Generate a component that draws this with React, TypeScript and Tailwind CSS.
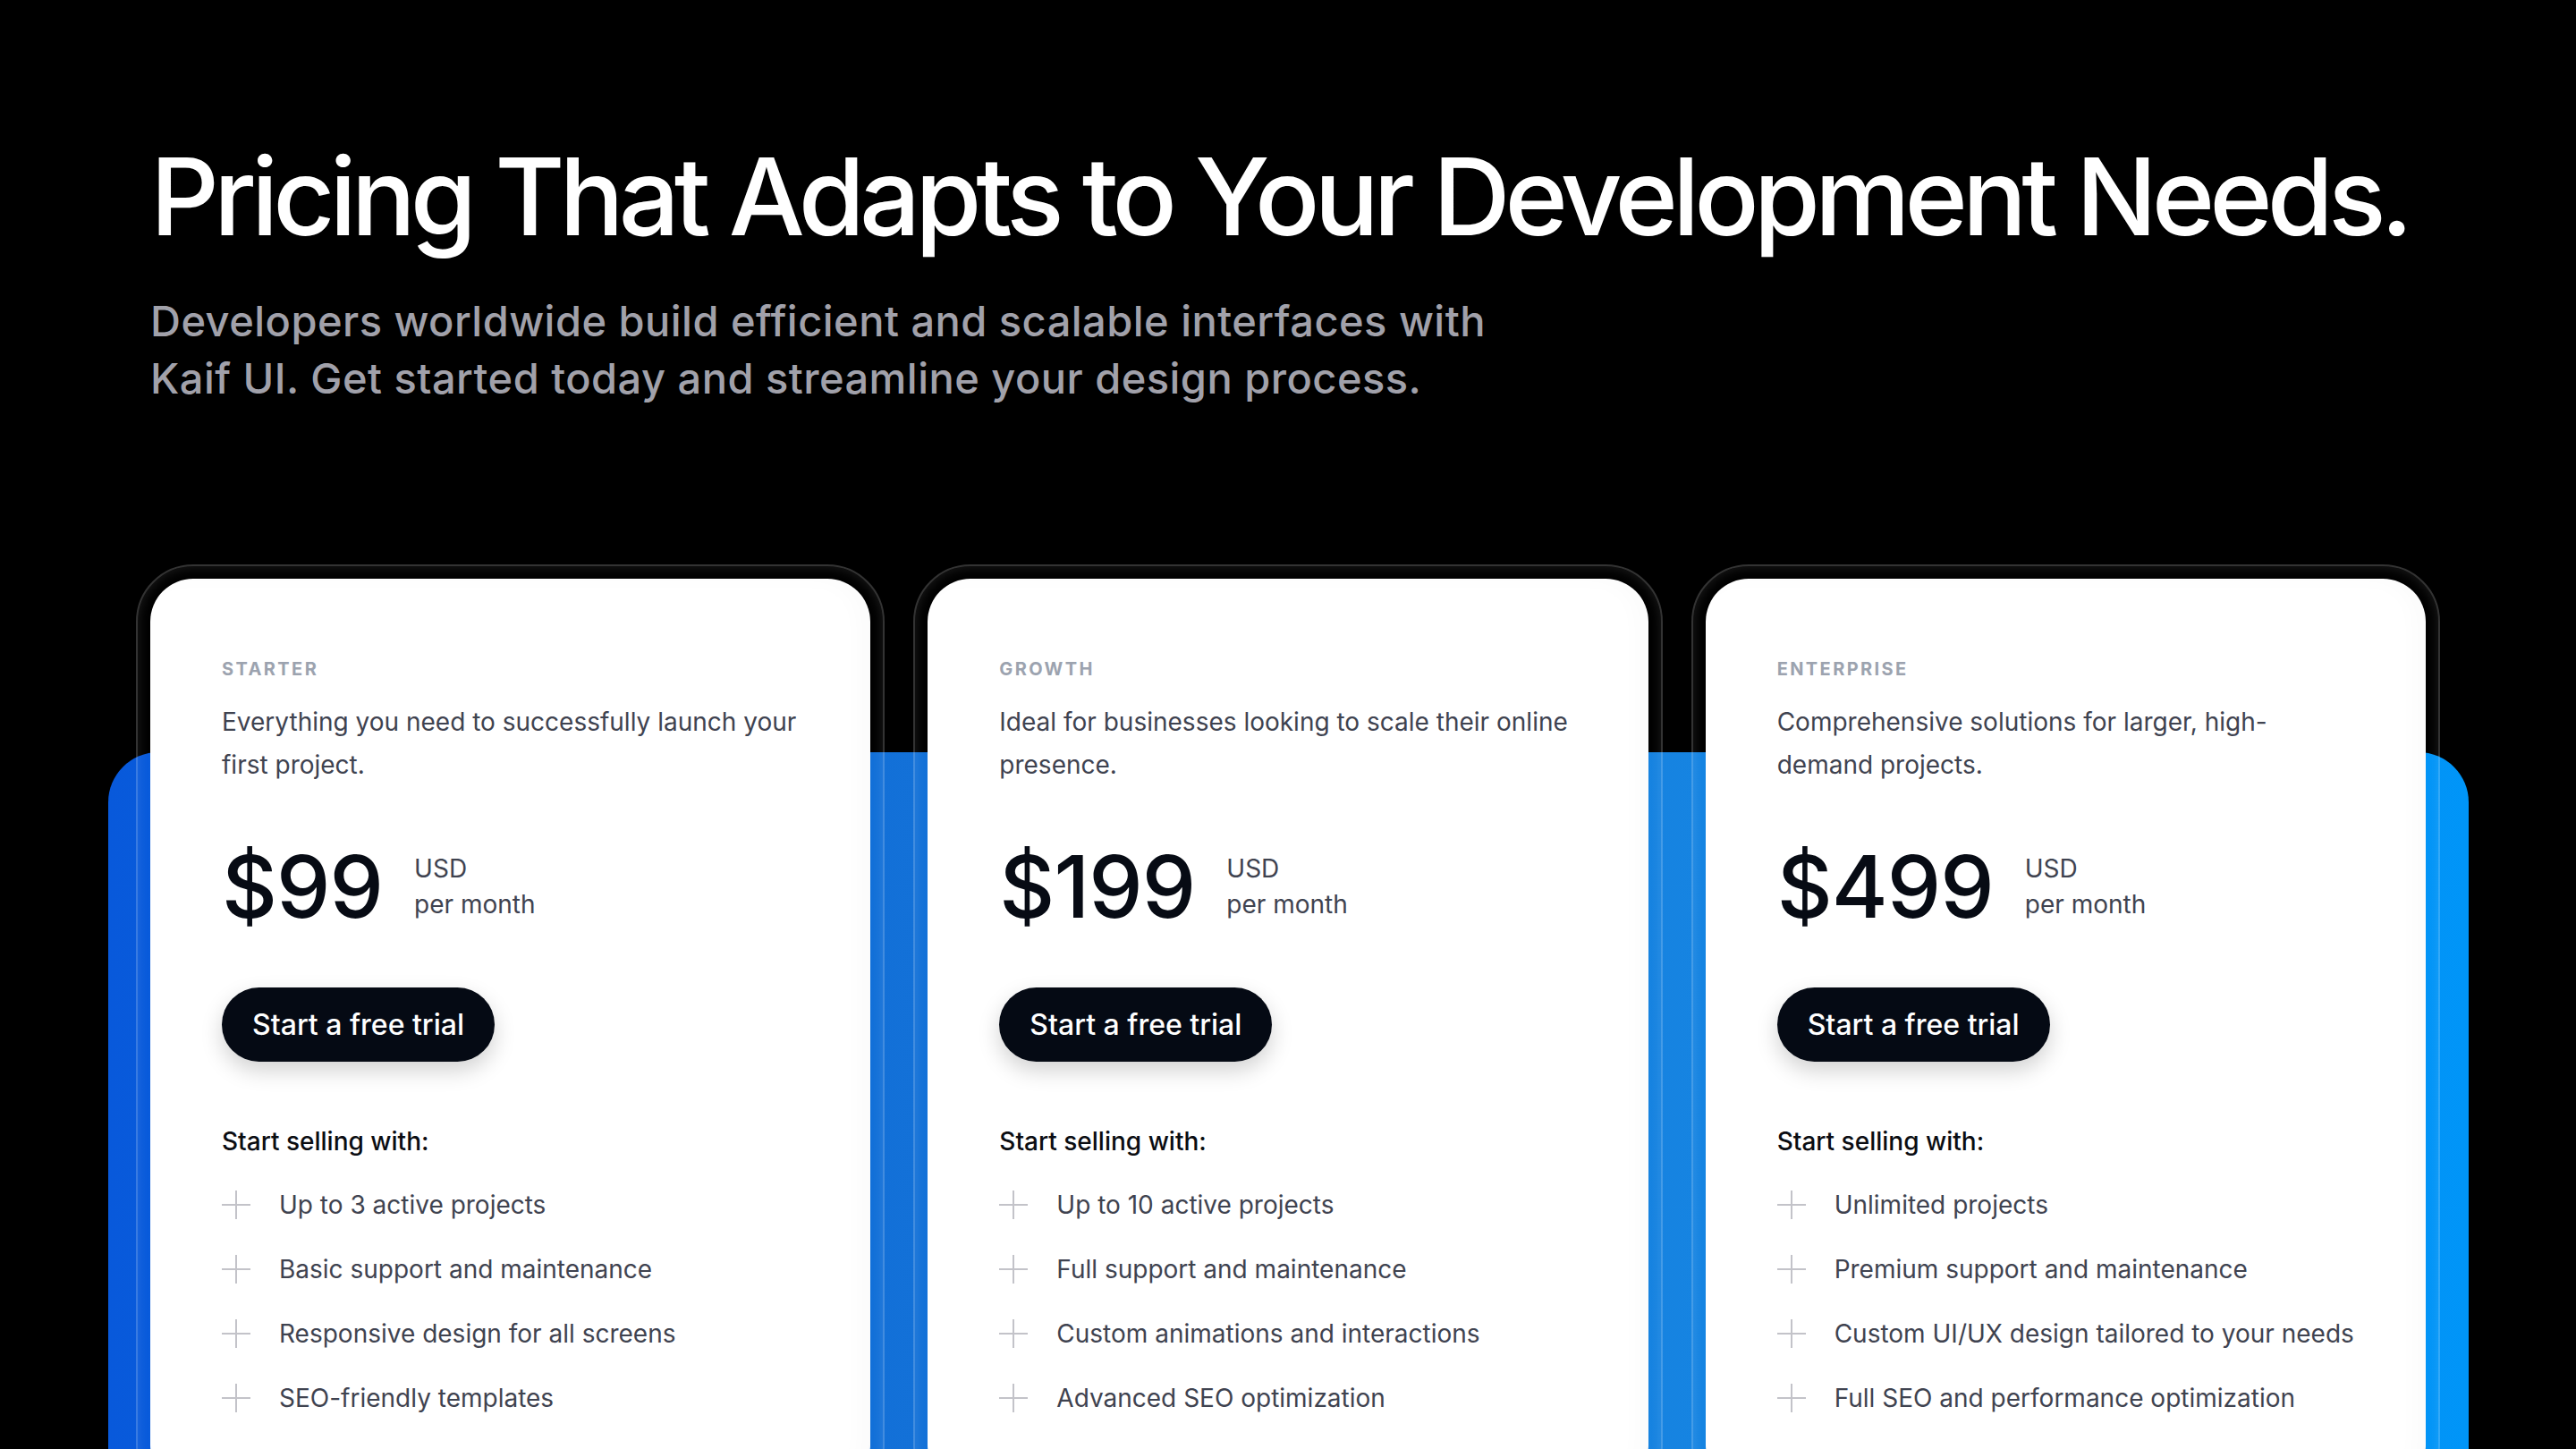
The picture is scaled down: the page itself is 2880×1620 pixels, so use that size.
import React from 'react';

interface Plan {
  id: string;
  name: string;
  description: string;
  price: string;
  features: string[];
}

const plans: Plan[] = [
  {
    id: 'starter',
    name: 'Starter',
    description: 'Everything you need to successfully launch your first project.',
    price: '$99',
    features: [
      'Up to 3 active projects',
      'Basic support and maintenance',
      'Responsive design for all screens',
      'SEO-friendly templates',
    ],
  },
  {
    id: 'growth',
    name: 'Growth',
    description: 'Ideal for businesses looking to scale their online presence.',
    price: '$199',
    features: [
      'Up to 10 active projects',
      'Full support and maintenance',
      'Custom animations and interactions',
      'Advanced SEO optimization',
    ],
  },
  {
    id: 'enterprise',
    name: 'Enterprise',
    description: 'Comprehensive solutions for larger, high-demand projects.',
    price: '$499',
    features: [
      'Unlimited projects',
      'Premium support and maintenance',
      'Custom UI/UX design tailored to your needs',
      'Full SEO and performance optimization',
    ],
  },
];

const PlusIcon: React.FC = () => (
  <svg className="w-8 h-8 shrink-0 text-[#c3c3c9]" viewBox="0 0 32 32" fill="none" stroke="currentColor" strokeWidth={2}>
    <path d="M16 0v32M0 16h32" />
  </svg>
);

const PlanCard: React.FC<{ plan: Plan }> = ({ plan }) => (
  <div className="rounded-[64px] border-2 border-white/20 p-[14px] shadow-[inset_0_0_14px_rgba(255,255,255,0.12)]">
    <div className="bg-white rounded-[48px] px-[80px] pt-[87px] pb-[80px] shadow-[inset_-12px_0_24px_rgba(0,0,0,0.02)]">
      {/* Plan label */}
      <div className="text-[20px] leading-[28px] font-bold uppercase tracking-[0.12em] text-[#9ca3af]">
        {plan.name}
      </div>
      <p className="mt-[21px] text-[28px] leading-[48px] text-[#3f4350]">{plan.description}</p>

      {/* Price */}
      <div className="mt-[64px] flex items-start gap-[35px]">
        <span className="text-[96px] leading-none font-medium tracking-[-0.01em] text-[#070b14]">{plan.price}</span>
        <div className="mt-2 text-[28px] leading-[40px] text-[#3f4350]">
          <div>USD</div>
          <div>per month</div>
        </div>
      </div>

      <button className="mt-[65px] h-[83px] px-[34px] rounded-full bg-[#050a14] text-white text-[32px] font-medium shadow-[0_10px_24px_rgba(0,0,0,0.18)]">
        Start a free trial
      </button>

      {/* Features */}
      <div className="mt-[69px] text-[28px] leading-[40px] font-medium text-[#0b0d12]">Start selling with:</div>
      <ul className="mt-[31px] flex flex-col gap-8">
        {plan.features.map((feature) => (
          <li key={feature} className="flex items-center gap-8 text-[28px] leading-[40px] text-[#3f4350]">
            <PlusIcon />
            <span className="whitespace-nowrap">{feature}</span>
          </li>
        ))}
      </ul>
    </div>
  </div>
);

const App: React.FC = () => {
  return (
    <div className="h-screen overflow-hidden bg-black font-['Inter',sans-serif] antialiased">
      <div className="mx-[168px] pt-[160px]">
        <h1 className="whitespace-nowrap text-[120px] leading-none font-medium tracking-[-0.05em] text-white">
          Pricing That Adapts to Your Development Needs.
        </h1>
        <p className="mt-[47px] max-w-[1560px] text-[47px] leading-[64px] font-medium tracking-[0.01em] text-[#a1a1aa]">
          Developers worldwide build efficient and scalable interfaces with Kaif UI. Get started today and streamline your design process.
        </p>

        <div className="relative mt-[176px] -mx-4">
          {/* Blue backdrop */}
          <div className="absolute -left-[31px] -right-[32px] top-[210px] h-[1200px] rounded-t-[56px] bg-gradient-to-r from-[#0859db] via-[#1b7bd6] to-[#0095f8]" />
          <div className="relative grid grid-cols-3 gap-8">
            {plans.map((plan) => (
              <PlanCard key={plan.id} plan={plan} />
            ))}
          </div>
        </div>
      </div>
    </div>
  );
};

export default App;
